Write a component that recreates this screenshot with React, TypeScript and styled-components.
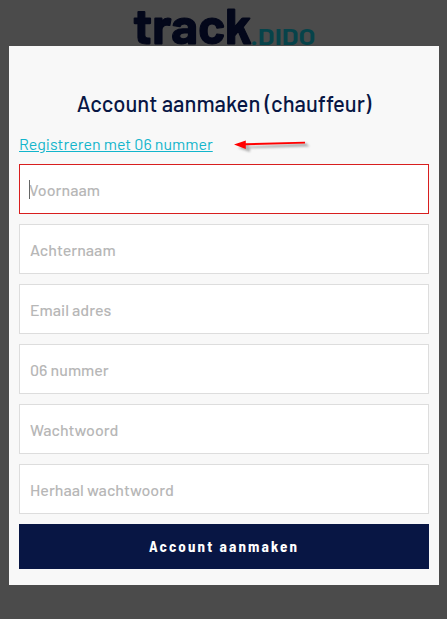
import React from "react";
import styled, { createGlobalStyle } from "styled-components";

const GlobalStyle = createGlobalStyle`
  * { box-sizing: border-box; }
  html, body, #root { height: 100%; }
  body {
    margin: 0;
    overflow: hidden;
    background: #4b4b4b;
    font-family: Barlow, Roboto, sans-serif;
  }
`;

const Page = styled.div`
  min-height: 619px;
  display: flex;
  flex-direction: column;
`;

const Brand = styled.header`
  height: 46px;
`;

const Logo = styled.svg`
  display: block;
  overflow: visible;
  font-family: Barlow, Roboto, sans-serif;
`;

const Dialog = styled.form`
  position: relative;
  width: 430px;
  height: 539px;
  margin: 0 0 0 9px;
  padding: 43px 10px 16px;
  background: #f8f8f8;
  display: flex;
  flex-direction: column;
`;

const Title = styled.h1`
  margin: 0;
  height: 29px;
  line-height: 29px;
  font-size: 22px;
  font-weight: 500;
  text-align: center;
  white-space: nowrap;
  color: #081644;
`;

const LinkRow = styled.div`
  height: 46px;
  padding-top: 15px;
  display: flex;
  align-items: flex-start;
`;

const PhoneLink = styled.a`
  width: 194px;
  height: 22px;
  line-height: 21px;
  font-size: 16px;
  white-space: nowrap;
  color: #12b5cb;
  text-decoration: underline;
`;

const Arrow = styled.svg`
  margin: 4px 0 0 18px;
`;

const Fields = styled.div`
  display: flex;
  flex-direction: column;
  gap: 10px;
`;

const Field = styled.label<{ $active?: boolean }>`
  position: relative;
  display: block;
  height: 50px;
  border: 1px solid ${(p) => (p.$active ? "#d81e1e" : "#dddddd")};
  background: #fff;
`;

const Input = styled.input<{ $active?: boolean }>`
  display: block;
  width: 100%;
  height: 48px;
  padding: 1px 10px 0 ${(p) => (p.$active ? 9 : 10)}px;
  border: 0;
  outline: 0;
  background: transparent;
  color: #333;
  font: 500 16px Barlow, Roboto, sans-serif;
  &::placeholder { color: #b7b7b7; opacity: 1; }
`;

const Caret = styled.span`
  position: absolute;
  left: 9px;
  top: 15px;
  width: 1px;
  height: 19px;
  background: #666;
`;

const Submit = styled.button`
  height: 45px;
  margin-top: 10px;
  padding: 0 0 2px;
  border: 0;
  background: #081644;
  color: #fff;
  font: 700 15px "Barlow Semi Condensed", Barlow, Roboto, sans-serif;
  letter-spacing: 2.15px;
`;

const fields = [
  { label: "Voornaam", active: true },
  { label: "Achternaam", active: false },
  { label: "Email adres", active: false },
  { label: "06 nummer", active: false },
  { label: "Wachtwoord", active: false },
  { label: "Herhaal wachtwoord", active: false },
];

export default function App() {
  return (
    <>
      <GlobalStyle />
      <Page>
        <Brand>
          <Logo width="447" height="46" viewBox="0 0 447 46" role="img" aria-label="track.DIDO">
            <text x="133" y="44.4" fontSize="50" fontWeight="700" textLength="119" lengthAdjust="spacingAndGlyphs" fill="#03071a" stroke="#03071a" strokeWidth="1.1">track</text>
            <text x="250.5" y="44.5" fontSize="23.5" fontWeight="700" textLength="65" lengthAdjust="spacingAndGlyphs" fill="#06434a">.DIDO</text>
          </Logo>
        </Brand>
        <Dialog onSubmit={(e) => e.preventDefault()}>
          <Title>Account aanmaken (chauffeur)</Title>
          <LinkRow>
            <PhoneLink href="#">Registreren met 06 nummer</PhoneLink>
            <Arrow width="82" height="20" viewBox="231 137 82 20" aria-hidden="true">
              <defs>
                <filter id="soft" x="-10%" y="-60%" width="120%" height="250%">
                  <feGaussianBlur stdDeviation="1" />
                </filter>
              </defs>
              <path d="M238 148 L249 143.5 V146.5 L306 143 L309.5 146.5 L250 148.3 V152 Z" fill="#777" opacity=".55" filter="url(#soft)" />
              <path d="M234 144.6 L245.8 140.4 V143.3 L305 141.8 V143.4 L245.8 145.3 V148.9 Z" fill="#f00" />
            </Arrow>
          </LinkRow>
          <Fields>
            {fields.map((f) => (
              <Field key={f.label} $active={f.active}>
                <Input placeholder={f.label} $active={f.active} />
                {f.active && <Caret />}
              </Field>
            ))}
          </Fields>
          <Submit>Account aanmaken</Submit>
        </Dialog>
      </Page>
    </>
  );
}
